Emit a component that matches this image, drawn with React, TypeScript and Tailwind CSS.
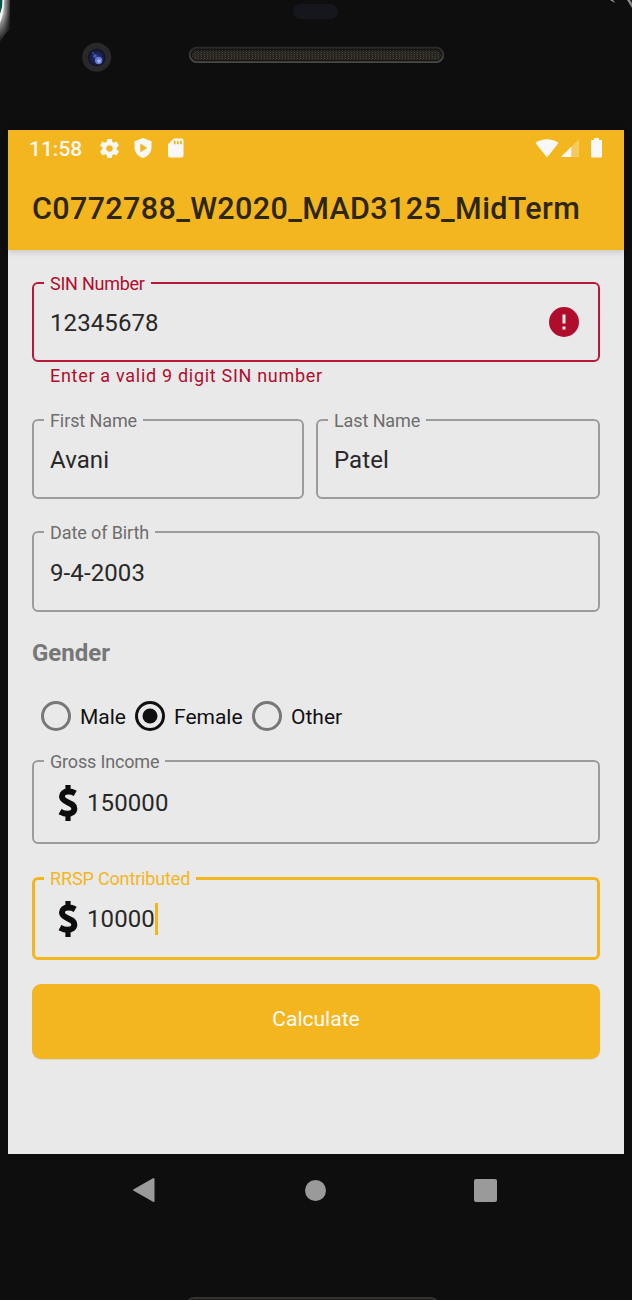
import type { ReactNode } from "react";

type FieldProps = {
  label: string;
  tone?: "error" | "idle" | "focus";
  className: string;
  labelClass: string;
  bodyClass?: string;
  children: ReactNode;
};

const tones = {
  error: "border-2 border-[#b8193a] pl-[10px] text-[#b00d2d]",
  idle: "border-2 border-[#9c9c9c] pl-[10px] text-[#6d6d6d]",
  focus: "border-[3px] border-[#f4b61e] pl-[9px] text-[#f4b61e]",
};

function Field({ label, tone = "idle", className, labelClass, bodyClass = "h-[60px]", children }: FieldProps) {
  return (
    <fieldset className={`min-w-0 rounded-[6px] ${tones[tone]} ${className}`}>
      <legend className={`h-5 whitespace-nowrap px-[6px] text-[18px] leading-[22px] ${labelClass}`}>{label}</legend>
      <div className={`flex items-center pl-[6px] text-[24px] tracking-[0.1px] text-[#282828] ${bodyClass}`}>{children}</div>
    </fieldset>
  );
}

function Dollar() {
  return (
    <svg className="ml-[8px] mr-[9px] mt-[-1px] h-9 w-5 shrink-0" viewBox="0 0 20 36" fill="none">
      <path
        d="M17.2 8.4C14.8 7 12.4 6.5 10 6.6C6.2 6.7 4 8.8 4 11.5C4 18.2 16.3 16.6 16.3 23.6C16.3 27 13.6 28.8 9.8 28.8C7 28.8 4.4 27.9 2 26.6"
        stroke="#0d0d0d"
        strokeWidth="6"
      />
      <path d="M10 0V7M10 29V36" stroke="#0d0d0d" strokeWidth="5.2" />
    </svg>
  );
}

function Radio({ label, checked = false, className }: { label: string; checked?: boolean; className: string }) {
  return (
    <div className={`flex items-center ${className}`}>
      <svg className="h-[30px] w-[30px] shrink-0" viewBox="0 0 30 30" fill="none">
        <circle cx="15" cy="15" r="13.5" stroke={checked ? "#101010" : "#777777"} strokeWidth="3" />
        {checked && <circle cx="15" cy="15" r="7.5" fill="#101010" />}
      </svg>
      <span className="pl-[9px] pt-[2px] text-[21px] leading-[30px] text-[#111111]">{label}</span>
    </div>
  );
}

function StatusBar() {
  return (
    <div className="flex h-9 items-center text-[#f8f8f8]">
      <span className="w-[70px] pl-[21px] pt-[2px] text-[21px] font-medium leading-9">11:58</span>
      <svg className="ml-[20px] h-[23px] w-[23px]" viewBox="0 0 24 24" fill="currentColor">
        <path d="M19.43 12.98c.04-.32.07-.64.07-.98s-.03-.66-.07-.98l2.11-1.65c.19-.15.24-.42.12-.64l-2-3.46c-.12-.22-.39-.3-.61-.22l-2.49 1c-.52-.4-1.08-.73-1.69-.98l-.38-2.65C14.46 2.18 14.25 2 14 2h-4c-.25 0-.46.18-.49.42l-.38 2.65c-.61.25-1.17.59-1.69.98l-2.49-1c-.23-.09-.49 0-.61.22l-2 3.46c-.13.22-.07.49.12.64l2.11 1.65c-.04.32-.07.65-.07.98s.03.66.07.98l-2.11 1.65c-.19.15-.24.42-.12.64l2 3.46c.12.22.39.3.61.22l2.49-1c.52.4 1.08.73 1.69.98l.38 2.65c.03.24.24.42.49.42h4c.25 0 .46-.18.49-.42l.38-2.65c.61-.25 1.17-.59 1.69-.98l2.49 1c.23.09.49 0 .61-.22l2-3.46c.12-.22.07-.49-.12-.64l-2.11-1.65zM12 15.5c-1.93 0-3.5-1.57-3.5-3.5s1.57-3.5 3.5-3.5 3.5 1.57 3.5 3.5-1.57 3.5-3.5 3.5z" />
      </svg>
      <svg className="ml-[13px] h-[20px] w-[18px]" viewBox="0 0 18 20" fill="currentColor" fillRule="evenodd">
        <path d="M9 0L17.5 3.2V9.5C17.5 14.5 14 18.5 9 20C4 18.5.5 14.5.5 9.5V3.2ZM6.3 5.6V14.2L13.3 9.9Z" />
      </svg>
      <svg className="ml-[15px] h-[20px] w-[18px]" viewBox="0 0 18 20" fill="currentColor" fillRule="evenodd">
        <path d="M6.7.5H14.5Q16.5.5 16.5 2.5V17.5Q16.5 19.5 14.5 19.5H3Q1 19.5 1 17.5V6.2ZM6.8 2.7V6.3H8.6V2.7ZM9.9 2.7V6.3H11.7V2.7ZM13 2.7V6.3H14.8V2.7Z" />
      </svg>
      <svg className="ml-auto h-[19px] w-[24px]" viewBox="0 0 24 19" fill="currentColor">
        <path d="M.5 4C7-.9 17-.9 23.5 4L12 18.5Z" />
      </svg>
      <svg className="ml-[2px] h-[18px] w-[18px]" viewBox="0 0 18 18" fill="currentColor">
        <path d="M18 0V18H0Z" opacity=".3" />
        <path d="M10.2 7.8V18H0Z" />
      </svg>
      <svg className="ml-[12px] mr-[22px] h-[20px] w-[11px]" viewBox="0 0 11 20" fill="currentColor">
        <path d="M3 0H8V2H10Q11 2 11 3V18.7Q11 19.5 10 19.5H1Q0 19.5 0 18.7V3Q0 2 1 2H3Z" />
      </svg>
    </div>
  );
}

function DeviceTop() {
  return (
    <svg className="block h-[130px] w-[632px] shrink-0" viewBox="0 0 632 130">
      <defs>
        <pattern id="mesh" width="3" height="2" patternUnits="userSpaceOnUse">
          <rect width="3" height="2" fill="#24221e" />
          <rect width="1" height="1" fill="#484438" />
          <rect x="2" y="1" width="1" height="1" fill="#353229" />
        </pattern>
        <linearGradient id="rim" x2="0" y2="1">
          <stop stopColor="#2c2c2c" />
          <stop offset="1" stopColor="#494949" />
        </linearGradient>
        <radialGradient id="lens">
          <stop offset=".25" stopColor="#202d70" />
          <stop offset="1" stopColor="#10121d" />
        </radialGradient>
        <linearGradient id="corner" x2="1" y2=".2">
          <stop stopColor="#f2f2f2" />
          <stop offset=".45" stopColor="#a9a9a9" />
          <stop offset="1" stopColor="#292929" />
        </linearGradient>
        <linearGradient id="fade" x2="0" y2="1">
          <stop offset=".3" stopColor="#0e0e0e" stopOpacity="0" />
          <stop offset="1" stopColor="#0e0e0e" />
        </linearGradient>
      </defs>
      <path d="M0 0H10V30Q5 32 0 43Z" fill="url(#corner)" />
      <path d="M0 0H10V43H0Z" fill="url(#fade)" />
      <path d="M0 0H4Q4 14 0 23Z" fill="#f2f8f6" />
      <path d="M0 0H2.4Q2.8 7 0 14Z" fill="#07544c" />
      <path d="M610 0L615 3L613 0Z" fill="#999" />
      <path d="M627 0H632V8Z" fill="#888" />
      <path d="M630 0H632V3Z" fill="#1a1a1a" />
      <rect x="293" y="4" width="45" height="15" rx="7.5" fill="#15171c" />
      <circle cx="96.7" cy="57.3" r="14.5" fill="#292929" />
      <circle cx="96.7" cy="57.5" r="9" fill="url(#lens)" />
      <circle cx="98.7" cy="60.5" r="3.7" fill="#6577d1" />
      <circle cx="99" cy="61" r="1.8" fill="#a7b3ef" />
      <circle cx="95" cy="56" r="1.8" fill="#465cbe" />
      <circle cx="93" cy="53" r="1" fill="#344cac" />
      <rect x="189.7" y="47.7" width="253.6" height="14.4" rx="7.2" fill="#171613" stroke="url(#rim)" strokeWidth="1.8" />
      <rect x="192" y="50.5" width="249" height="9.5" rx="4.7" fill="url(#mesh)" />
    </svg>
  );
}

export default function App() {
  return (
    <div className="flex h-[1300px] w-[632px] flex-col overflow-hidden bg-[#0e0e0e] font-['Roboto',sans-serif]">
      <DeviceTop />
      <main className="mx-2 flex h-[1024px] shrink-0 flex-col bg-[#e9e9e9]">
        <header className="h-[120px] shrink-0 bg-[#f4b61e] shadow-[0_2px_6px_rgba(0,0,0,0.15)]">
          <StatusBar />
          <h1 className="whitespace-nowrap pl-6 text-[30.5px] font-medium leading-[86px] tracking-[0.36px] text-[#2d2614]">C0772788_W2020_MAD3125_MidTerm</h1>
        </header>
        <form className="flex flex-col px-6 pt-[23px]">
          <Field label="SIN Number" tone="error" className="h-[89px]" labelClass="tracking-[-0.25px]">
            <span>12345678</span>
            <svg className="ml-auto mr-[19px] mt-[-2px] h-[30px] w-[30px]" viewBox="0 0 30 30">
              <circle cx="15" cy="15" r="15" fill="#b00d2d" />
              <path d="M13.5 7.5H16.5V16.5H13.5ZM13.5 19.5H16.5V22.5H13.5Z" fill="#eeeeee" />
            </svg>
          </Field>
          <p className="pl-[18px] text-[18px] leading-[27px] tracking-[0.7px] text-[#b00d2d]">Enter a valid 9 digit SIN number</p>
          <div className="mt-[21px] flex gap-3">
            <Field label="First Name" className="h-[89px] w-[272px]" labelClass="tracking-[-0.1px]">Avani</Field>
            <Field label="Last Name" className="h-[89px] w-[284px]" labelClass="tracking-[-0.1px]">Patel</Field>
          </div>
          <Field label="Date of Birth" className="mt-[23px] h-[90px]" labelClass="tracking-[-0.1px]" bodyClass="h-[61px]">9-4-2003</Field>
          <h2 className="mt-[25px] text-[24px] font-bold leading-[32px] text-[#777777]">Gender</h2>
          <div className="mt-[32px] flex h-[30px] pl-[9px]">
            <Radio label="Male" className="w-[94px]" />
            <Radio label="Female" checked className="w-[117px]" />
            <Radio label="Other" className="w-[100px]" />
          </div>
          <Field label="Gross Income" className="mt-[20px] h-[93px]" labelClass="tracking-[-0.17px]" bodyClass="h-[64px]">
            <Dollar />
            <span>150000</span>
          </Field>
          <Field label="RRSP Contributed" tone="focus" className="mt-[24px] h-[92px]" labelClass="tracking-[-0.15px]" bodyClass="h-[62px]">
            <Dollar />
            <span>10000</span>
            <span className="h-8 w-[3px] bg-[#f4b61e]" />
          </Field>
          <button type="button" className="mt-6 h-[75px] rounded-[9px] bg-[#f4b61e] pb-[3px] text-[21px] text-[#fbfbfb] shadow-[0_1px_1px_rgba(0,0,0,0.08)]">Calculate</button>
        </form>
      </main>
      <nav className="flex h-[72px] shrink-0 items-center pl-[133px]">
        <svg className="h-6 w-[22px]" viewBox="0 0 22 24"><path d="M20.5 1L1.2 12L20.5 23Z" fill="#9a9a9a" stroke="#9a9a9a" strokeWidth="2" strokeLinejoin="round" /></svg>
        <span className="ml-[150px] h-[21px] w-[21px] rounded-full bg-[#9a9a9a]" />
        <span className="ml-[148px] h-[23px] w-[23px] rounded-[2px] bg-[#9a9a9a]" />
      </nav>
      <div className="ml-[186px] mt-[71px] h-4 w-[253px] shrink-0 rounded-[8px] border-2 border-[#333333] bg-[#1c1b19]" />
    </div>
  );
}
